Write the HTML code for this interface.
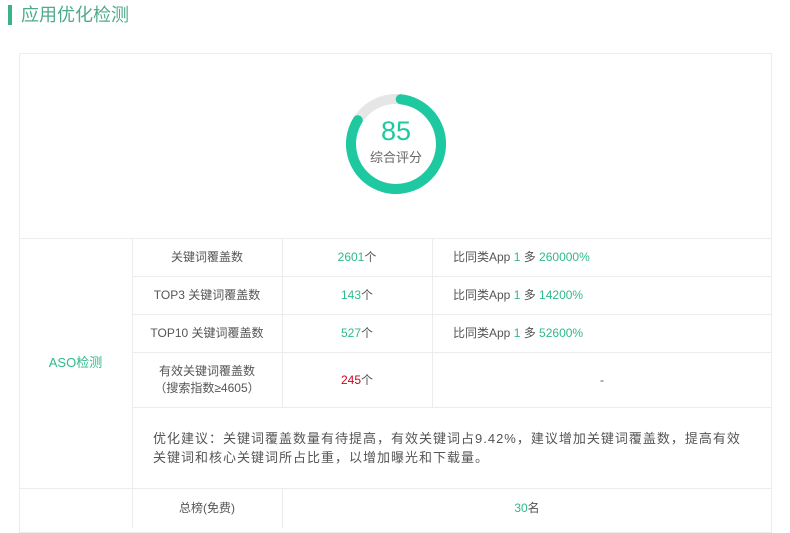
<!DOCTYPE html>
<html><head><meta charset="utf-8"><style>
*{margin:0;padding:0;box-sizing:border-box}
body{width:790px;height:525px;overflow:hidden;background:#fff;font-family:"Liberation Sans","Noto Sans CJK SC",sans-serif;color:#555;position:relative}
.hd{position:absolute;left:8px;top:5px;height:20px;border-left:4px solid #3bb28c;padding-left:9px;font-size:18px;line-height:20px;color:#4eab8c}
.box{position:absolute;left:19px;top:53px;width:753px;height:480px;border:1px solid #ececec}
.l{position:absolute;background:#ececec}
.t{position:absolute;font-size:12px;text-align:center;line-height:16px}
.g{color:#2fb98c}.r{color:#d0021b}
</style></head><body>
<div class="hd">应用优化检测</div>
<div class="box"></div>
<svg style="position:absolute;left:340px;top:88px" width="112" height="112">
<circle cx="56" cy="56" r="45" fill="none" stroke="#e6e6e6" stroke-width="10"/>
<circle cx="56" cy="56" r="45" fill="none" stroke="#1ec8a0" stroke-width="10" stroke-linecap="round" stroke-dasharray="232 400" transform="rotate(-84 56 56)"/>
</svg>
<div class="t" style="left:346px;top:116px;width:100px;font-size:27px;line-height:30px;color:#1ec8a0">85</div>
<div class="t" style="left:346px;top:150px;width:100px;font-size:13px;color:#666">综合评分</div>
<div class="l" style="left:19px;top:238px;width:753px;height:1px"></div>
<div class="l" style="left:132px;top:276px;width:640px;height:1px"></div>
<div class="l" style="left:132px;top:314px;width:640px;height:1px"></div>
<div class="l" style="left:132px;top:352px;width:640px;height:1px"></div>
<div class="l" style="left:132px;top:407px;width:640px;height:1px"></div>
<div class="l" style="left:19px;top:488px;width:753px;height:1px"></div>
<div class="l" style="left:132px;top:238px;width:1px;height:290px"></div>
<div class="l" style="left:282px;top:238px;width:1px;height:170px"></div>
<div class="l" style="left:432px;top:238px;width:1px;height:170px"></div>
<div class="l" style="left:282px;top:488px;width:1px;height:40px"></div>
<div class="t g" style="left:19px;top:355px;width:113px;font-size:13px">ASO检测</div>
<div class="t" style="left:132px;top:249px;width:150px">关键词覆盖数</div>
<div class="t" style="left:132px;top:287px;width:150px">TOP3 关键词覆盖数</div>
<div class="t" style="left:132px;top:325px;width:150px">TOP10 关键词覆盖数</div>
<div class="t" style="left:132px;top:363px;width:150px;line-height:17px">有效关键词覆盖数<br>（搜索指数≥4605）</div>
<div class="t" style="left:282px;top:249px;width:150px"><span class="g">2601</span>个</div>
<div class="t" style="left:282px;top:287px;width:150px"><span class="g">143</span>个</div>
<div class="t" style="left:282px;top:325px;width:150px"><span class="g">527</span>个</div>
<div class="t" style="left:282px;top:372px;width:150px"><span class="r">245</span>个</div>
<div class="t" style="left:453px;top:249px;text-align:left">比同类App <span class="g">1</span> 多 <span class="g">260000%</span></div>
<div class="t" style="left:453px;top:287px;text-align:left">比同类App <span class="g">1</span> 多 <span class="g">14200%</span></div>
<div class="t" style="left:453px;top:325px;text-align:left">比同类App <span class="g">1</span> 多 <span class="g">52600%</span></div>
<div class="t" style="left:432px;top:372px;width:340px">-</div>
<div class="t" style="left:153px;top:429px;width:610px;text-align:left;font-size:13px;line-height:19px;letter-spacing:1px;color:#555">优化建议：关键词覆盖数量有待提高，有效关键词占9.42%，建议增加关键词覆盖数，提高有效<br>关键词和核心关键词所占比重，以增加曝光和下载量。</div>
<div class="t" style="left:132px;top:500px;width:150px">总榜(免费)</div>
<div class="t" style="left:282px;top:500px;width:490px"><span class="g">30</span>名</div>
</body></html>
